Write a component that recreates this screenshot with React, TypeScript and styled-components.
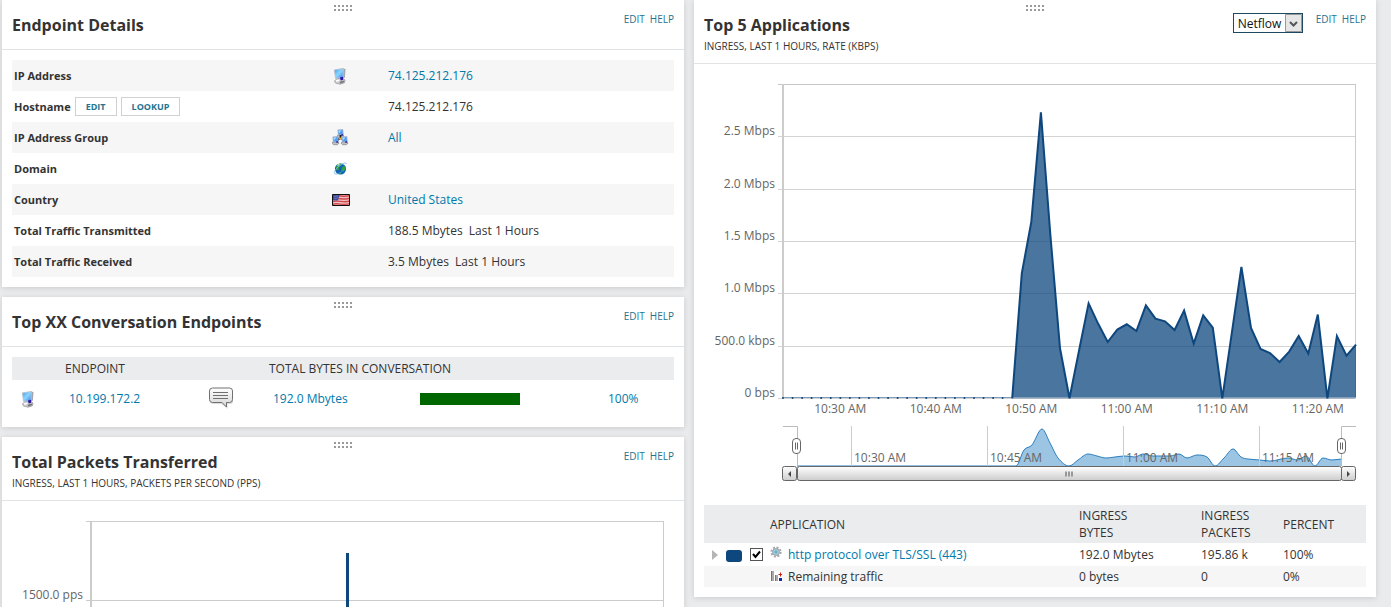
import React from "react";
import styled, { createGlobalStyle } from "styled-components";

const GlobalStyle = createGlobalStyle`
  *, *::before, *::after { box-sizing: border-box; }
  body {
    margin: 0;
    background: #eaebed;
    color: #333;
    font: 12px/17px "Open Sans", "Noto Sans", sans-serif;
  }
  a { color: #0079aa; text-decoration: none; }
  svg { display: block; }
`;

const Page = styled.main`
  display: grid;
  grid-template-columns: 1fr 1fr;
  gap: 10px;
  align-items: start;
  height: 100vh;
  overflow-y: auto;
  scrollbar-width: none;
  padding: 0 15px 0 2px;
`;

const Column = styled.div`
  display: flex;
  flex-direction: column;
  gap: 10px;
  min-width: 0;
`;

const Card = styled.section`
  position: relative;
  background: #fff;
  box-shadow: 0 1px 6px rgba(0, 0, 0, 0.14);
`;

const Grip = styled.svg`
  position: absolute;
  top: 5px;
  left: 50%;
  margin-left: -9px;
  fill: #999;
`;

const CardHeader = styled.header`
  display: flex;
  align-items: flex-start;
  padding: 12px 10px 11px;
  border-bottom: 1px solid #e2e3e4;
`;

const Titles = styled.div`
  flex: 1;
`;

const Title = styled.h2`
  margin: 0;
  font-size: 16px;
  font-weight: 700;
  line-height: 26px;
`;

const Subtitle = styled.div`
  padding-top: 2px;
  font-size: 10px;
  line-height: 12px;
  text-transform: uppercase;
`;

const Actions = styled.nav`
  display: flex;
  gap: 5px;
  font-size: 10px;
  line-height: 14px;
  a { color: #24748f; }
`;

const CardBody = styled.div`
  padding: 10px;
`;

const SelectBox = styled.div`
  position: relative;
  margin: 1px 13px -7px 0;
`;

const Select = styled.select`
  appearance: none;
  display: block;
  width: 70px;
  height: 20px;
  padding: 0 18px 0 4px;
  border: 1px solid #1d4a60;
  border-radius: 0;
  background: #fff;
  color: #111;
  font: inherit;
`;

const SelectArrow = styled.svg`
  position: absolute;
  top: 1px;
  right: 1px;
  pointer-events: none;
`;

const DetailTable = styled.table`
  width: 100%;
  border-collapse: collapse;
  table-layout: fixed;
  th, td { height: 31px; padding: 0 4px; text-align: left; }
  th { padding: 0 2px; font-size: 11px; font-weight: 700; }
  tr:nth-child(odd) { background: #f6f6f6; }
`;

const LabelRow = styled.div`
  display: flex;
  align-items: center;
  gap: 4px;
`;

const SmallButton = styled.button`
  height: 19px;
  padding: 0 10px;
  border: 1px solid #d0d1d2;
  background: #fff;
  color: #24748f;
  font: 700 9px/15px "Open Sans", sans-serif;
`;

const Col = styled.col<{ $w?: number }>`
  width: ${(p) => (p.$w ? `${p.$w}px` : "auto")};
`;

const DataTable = styled.table<{ $pad: number }>`
  width: 100%;
  border-collapse: collapse;
  table-layout: fixed;
  th {
    background: #ebecee;
    padding: 2px ${(p) => p.$pad}px;
    font-weight: 400;
    text-align: left;
    text-transform: uppercase;
  }
  td { padding: 0; }
`;

const ConversationTable = styled(DataTable)`
  th { height: 23px; }
  td { height: 37px; padding-left: 8px; }
`;

const BarTrack = styled.td`
  && { padding: 0; }
`;

const PercentCell = styled.td`
  && { padding-left: 88px; }
`;

const Bar = styled.div`
  height: 12px;
  background: #060;
`;

const AppTable = styled(DataTable)`
  th { height: 38px; }
  td { height: 23px; }
  tr:nth-child(2) td { height: 21px; background: #f6f6f6; }
`;

const AppName = styled.div`
  display: flex;
  align-items: center;
  gap: 6px;
`;

const ExpandButton = styled.button`
  display: block;
  margin-left: 8px;
  padding: 0;
  border: 0;
  background: none;
`;

const Swatch = styled.div`
  width: 16px;
  height: 12px;
  margin: 2px 0 0 4px;
  border-radius: 3px;
  background: #0e477e;
`;

const Check = styled.input`
  appearance: none;
  display: block;
  width: 13px;
  height: 13px;
  margin: 0 0 0 4px;
  border: 1px solid #555;
  background: #fff;
  &:not(:checked) + svg { visibility: hidden; }
`;

const CheckBox = styled.label`
  position: relative;
  display: block;
  svg {
    position: absolute;
    top: 0;
    left: 4px;
    pointer-events: none;
  }
`;

const Chart = styled.svg`
  width: 100%;
  height: auto;
  font-size: 12px;
  fill: #666;
`;

const ComputerIcon = () => (
  <svg width="16" height="18" viewBox="0 0 16 18">
    <defs>
      <linearGradient id="screen" x1="0" y1="0" x2="1" y2="1">
        <stop offset="0" stopColor="#3a9cf0" />
        <stop offset="0.5" stopColor="#8bd6ff" />
        <stop offset="1" stopColor="#2f7cf0" />
      </linearGradient>
    </defs>
    <path d="M10.500 1.500l3 .6-.6 8.400-1.900 1z" fill="#a5a5ae" />
    <path d="M2.500 14l2.500-2.500h6l2 1.500-.6 2.800-4.400 1.400-4.500-1.200z" fill="#cfcfd2" stroke="#98989d" strokeWidth="0.800" />
    <path d="M2.300 2.900L11.400 1.400l-.4 9-7.400 1z" fill="url(#screen)" stroke="#bcc0ca" strokeWidth="0.900" />
    <path d="M7.800 10.600l3.200-.8.200 3-2.400.7z" fill="#2716a8" />
    <path d="M7.500 14.800l4.600-1.400v1.900l-4 1.200z" fill="#77777c" />
    <path d="M4 14l3.400-.6" stroke="#fff" strokeWidth="1.400" />
  </svg>
);

const MiniComputer = ({ x, y }: { x: number; y: number }) => (
  <g transform={`translate(${x} ${y})`}>
    <path d="M.8 6h5.400l.8 1.200-1.600 1.500H1.600L.2 7.400z" fill="#c2c2c6" stroke="#7f7f85" strokeWidth="0.700" />
    <path d="M.8.9l5-.5.5 5-5 .7z" fill="#4f9df5" stroke="#a9b3c8" strokeWidth="0.700" />
    <path d="M1.500 1.600l3-.3-2.600 2.900z" fill="#b5dcff" />
    <path d="M3.800 5.400l2.300-.4v1.800H4.400z" fill="#2f2b9e" />
  </g>
);

const GroupIcon = () => (
  <svg width="17" height="17" viewBox="0 0 17 17">
    <MiniComputer x={5} y={0} />
    <path d="M8.500 6v4M8.500 9L5 11.500M8.500 9l3.500 2" stroke="#1c1c1c" strokeWidth="1.800" />
    <path d="M7 8.500h3v2H7z" fill="#eea11f" />
    <MiniComputer x={0} y={7} />
    <MiniComputer x={9} y={7} />
  </svg>
);

const GlobeIcon = () => (
  <svg width="16" height="16" viewBox="0 0 16 16">
    <circle cx="8.500" cy="8" r="5.600" fill="#1262b4" />
    <path d="M4 6c1-2.600 3-3.600 5.500-3.400L8.500 5 6.800 6.600 7 8.500 4.500 9.600zM10 6l3-1.200.8 3-2 2.600-2.600-.6zM7 11l2.600.8L8 13.200z" fill="#31a04a" />
    <path d="M5.500 4.500l2-1.300" stroke="#c3eecb" strokeWidth="1.200" />
    <path d="M2.800 12.800c-1.600-1 .8-5 4.400-7.800s6.800-3.800 7.300-2.200" fill="none" stroke="#7fc4e4" strokeWidth="0.900" />
    <path d="M2.800 12.800c2.200.9 6-1 8.900-4" fill="none" stroke="#52a6d2" strokeWidth="0.700" />
  </svg>
);

const FlagIcon = () => (
  <svg width="18" height="12" viewBox="0 0 18 12">
    <path d="M0 0h18v12H0z" fill="#efc0c0" />
    <path d="M0 2.500c6-2.500 11 1.500 18-1M0 5.200c6-2.500 11 1.500 18-1M0 7.900c6-2.500 11 1.500 18-1M0 10.600c6-2.500 11 1.500 18-1" stroke="#d5484d" strokeWidth="1.400" fill="none" />
    <path d="M1 1h6.500L6 6.500H1z" fill="#3f4c9c" />
    <path d="M3 2v3M5 1.500v3" stroke="#8d99d0" strokeDasharray="1 1" />
    <path d="M.5.500h17v11H.5z" fill="none" stroke="#111" />
  </svg>
);

const BubbleIcon = () => (
  <svg width="26" height="24" viewBox="0 0 26 24">
    <defs>
      <linearGradient id="bubble" x1="0" y1="0" x2="0" y2="1">
        <stop offset="0" stopColor="#fff" />
        <stop offset="1" stopColor="#d4d4d4" />
      </linearGradient>
    </defs>
    <path d="M4 3h18a2 2 0 012 2v9.500a2.500 2.500 0 01-2.500 2.500h-3v5L12.500 17H4a2.500 2.500 0 01-2.500-2.500z" fill="#000" opacity="0.140" />
    <path d="M3.500 1h17a3 3 0 013 3v8.500a3 3 0 01-3 3h-3v4.500L13 15.500H3.500a3 3 0 01-3-3V4a3 3 0 013-3z" fill="url(#bubble)" stroke="#707070" />
    <path d="M4 5.500h15M4 8.500h15M4 11.500h15" stroke="#707070" />
  </svg>
);

const GearShape = styled.svg`
  margin-top: -5px;
`;

const GearIcon = () => (
  <GearShape width="12" height="12" viewBox="0 0 12 12">
    <circle cx="6" cy="6" r="4.600" fill="none" stroke="#a3a8ab" strokeWidth="2" strokeDasharray="2 1.610" />
    <circle cx="6" cy="6" r="3.400" fill="#b4d2de" stroke="#979da1" />
    <circle cx="6" cy="6" r="1.700" fill="#5fb3d0" />
  </GearShape>
);

const RemainingIcon = () => (
  <svg width="12" height="12" viewBox="0 0 12 12">
    <path d="M0 0h12v12H0z" fill="#fff" />
    <path d="M1 0h3v10H1zM5 4h3v6H5z" fill="#aaa" />
    <path d="M1 0h1v10H1zM5 4h1v6H5z" fill="#777" />
    <path d="M9 7h3v3H9z" fill="#1428b4" />
    <path d="M8.500 3.500H12M10.500 1.500v4" stroke="#d01818" />
  </svg>
);

const DragGrip = () => (
  <Grip width="18" height="6" viewBox="0 0 18 6">
    {[0, 4, 8, 12, 16].map((x) => (
      <path key={x} d={`M${x} 0h2v2h-2zM${x} 4h2v2h-2z`} />
    ))}
  </Grip>
);

type PanelProps = {
  title: string;
  subtitle?: string;
  tools?: React.ReactNode;
  children: React.ReactNode;
};

const Panel = ({ title, subtitle, tools, children }: PanelProps) => (
  <Card>
    <DragGrip />
    <CardHeader>
      <Titles>
        <Title>{title}</Title>
        {subtitle && <Subtitle>{subtitle}</Subtitle>}
      </Titles>
      {tools}
      <Actions>
        <a href="#edit">EDIT</a>
        <a href="#help">HELP</a>
      </Actions>
    </CardHeader>
    <CardBody>{children}</CardBody>
  </Card>
);

const details: { label: string; icon?: React.ReactNode; value?: string; link?: boolean }[] = [
  { label: "IP Address", icon: <ComputerIcon />, value: "74.125.212.176", link: true },
  { label: "Hostname", value: "74.125.212.176" },
  { label: "IP Address Group", icon: <GroupIcon />, value: "All", link: true },
  { label: "Domain", icon: <GlobeIcon /> },
  { label: "Country", icon: <FlagIcon />, value: "United States", link: true },
  { label: "Total Traffic Transmitted", value: "188.5 Mbytes\u00a0 Last 1 Hours" },
  { label: "Total Traffic Received", value: "3.5 Mbytes\u00a0 Last 1 Hours" },
];

const EndpointDetails = () => (
  <Panel title="Endpoint Details">
    <DetailTable>
      <colgroup>
        <Col $w={316} />
        <Col $w={56} />
        <Col />
      </colgroup>
      <tbody>
        {details.map((d) => (
          <tr key={d.label}>
            <th scope="row">
              <LabelRow>
                {d.label}
                {d.label === "Hostname" && (
                  <>
                    <SmallButton type="button">EDIT</SmallButton>
                    <SmallButton type="button">LOOKUP</SmallButton>
                  </>
                )}
              </LabelRow>
            </th>
            <td>{d.icon}</td>
            <td>{d.link ? <a href="#detail">{d.value}</a> : d.value}</td>
          </tr>
        ))}
      </tbody>
    </DetailTable>
  </Panel>
);

const Conversations = () => (
  <Panel title="Top XX Conversation Endpoints">
    <ConversationTable $pad={4}>
      <colgroup>
        <Col $w={49} />
        <Col $w={140} />
        <Col $w={64} />
        <Col $w={155} />
        <Col $w={100} />
        <Col />
      </colgroup>
      <thead>
        <tr>
          <th />
          <th scope="col">Endpoint</th>
          <th />
          <th scope="col" colSpan={3}>Total bytes in conversation</th>
        </tr>
      </thead>
      <tbody>
        <tr>
          <td><ComputerIcon /></td>
          <td><a href="#endpoint">10.199.172.2</a></td>
          <td><BubbleIcon /></td>
          <td><a href="#bytes">192.0 Mbytes</a></td>
          <BarTrack><Bar style={{ width: "100%" }} /></BarTrack>
          <PercentCell><a href="#percent">100%</a></PercentCell>
        </tr>
      </tbody>
    </ConversationTable>
  </Panel>
);

const PacketsChart = () => (
  <Chart viewBox="0 0 662 330" role="img" aria-label="Packets per second">
    <g stroke="#ccc" shapeRendering="crispEdges">
      <path d="M74 10.500h577.500v314M74 89.500h577.500M74 168.500h577.500M74 246.500h577.500M74 324.500h577.500" fill="none" />
      <path d="M79 10v314" strokeWidth="2" />
    </g>
    <text x="71" y="88" textAnchor="end">1500.0 pps</text>
    <path d="M334 42h3v282h-3z" fill="#0e477e" />
  </Chart>
);

const kbps = [
  ...Array(25).fill(0),
  1195, 1685, 2734, 1558, 478, 0, 459, 908, 712, 538, 657, 707, 643, 889, 762, 736, 653, 838, 523,
  793, 676, 0, 631, 1255, 672, 471, 433, 347, 446, 596, 427, 800, 0, 596, 408, 513,
];

const PLOT = { x: 79, top: 10.5, width: 573, height: 313.8, step: 9.55, max: 3000 };
const BASE = PLOT.top + PLOT.height;
const px = (i: number) => PLOT.x + i * PLOT.step;
const py = (v: number) => BASE - (v / PLOT.max) * PLOT.height;
const areaLine = kbps.map((v, i) => `${i ? "L" : "M"}${px(i).toFixed(1)} ${py(v).toFixed(1)}`).join("");
const yLabels = ["", "2.5 Mbps", "2.0 Mbps", "1.5 Mbps", "1.0 Mbps", "500.0 kbps", "0 bps"];
const xLabels = ["10:30 AM", "10:40 AM", "10:50 AM", "11:00 AM", "11:10 AM", "11:20 AM"];

const NAV = { top: 352, bottom: 392 };
const overview: [number, number][] = [
  [93, 0], [312, 0], [320, 16], [328, 21], [338, 37], [346, 23], [354, 8], [365, 0],
  [374, 6], [384, 12], [393, 10], [402, 8], [411, 9], [421, 10], [431, 9], [439, 12], [449, 10], [466, 10],
  [475, 12], [483, 8], [493, 11], [503, 9], [511, 0], [520, 8], [529, 17], [537, 9], [544, 7], [556, 6],
  [566, 5], [584, 8], [594, 6], [602, 10], [611, 0], [619, 8], [628, 6], [638, 7],
];

// Slope of the overview curve at a point; level where it peaks or touches zero.
const slopeAt = (i: number) => {
  const prev = overview[i - 1];
  const next = overview[i + 1];
  const [, v] = overview[i];
  if (!prev || !next || v === 0 || (v - prev[1]) * (next[1] - v) <= 0) return 0;
  return (next[1] - prev[1]) / (next[0] - prev[0]);
};

const overviewLine = overview.reduce((path, [x, v], i) => {
  const y = NAV.bottom - v;
  if (i === 0) return `M${x} ${y}`;
  const [x1, v1] = overview[i - 1];
  const run = (x - x1) / 3;
  const c1 = NAV.bottom - v1 - slopeAt(i - 1) * run;
  const c2 = y + slopeAt(i) * run;
  return `${path}C${(x1 + run).toFixed(1)} ${c1.toFixed(1)} ${(x - run).toFixed(1)} ${c2.toFixed(1)} ${x} ${y}`;
}, "");

const navTicks: [number, string][] = [[147, "10:30 AM"], [283, "10:45 AM"], [419, "11:00 AM"], [555, "11:15 AM"]];

const NavHandle = ({ x }: { x: number }) => (
  <g transform={`translate(${x} 364)`} stroke="#666">
    <rect x="-3.500" y="0.500" width="8" height="15" rx="3.500" fill="#fff" />
    <path d="M-.5 4.500v7M1.500 4.500v7" />
  </g>
);

const ApplicationsChart = () => (
  <Chart viewBox="0 0 662 431" role="img" aria-label="Top applications rate">
    <defs>
      <linearGradient id="thumb" x1="0" y1="0" x2="0" y2="1">
        <stop offset="0" stopColor="#fff" />
        <stop offset="1" stopColor="#ccc" />
      </linearGradient>
    </defs>
    {yLabels.map((label, i) => {
      const y = Math.floor(PLOT.top + (i * PLOT.height) / 6);
      return (
        <g key={i}>
          <path d={`M74 ${y}.500h577`} stroke={i ? "#d3d3d3" : "#c6c6c6"} shapeRendering="crispEdges" />
          <text x="71" y={y - 1} textAnchor="end">{label}</text>
        </g>
      );
    })}
    <path d="M651.500 10v314" stroke="#ccc" />
    <path d="M79 10v314" stroke="#ccc" strokeWidth="2" />
    <path d={`${areaLine}V${BASE}H${PLOT.x}z`} fill="#0e477e" fillOpacity="0.750" />
    <path d={`M${PLOT.x} 323.500h${PLOT.width}`} stroke="#7f9cba" />
    <path d={areaLine.slice(areaLine.indexOf("L" + px(24).toFixed(1))).replace("L", "M")} fill="none" stroke="#0e477e" strokeWidth="2" />
    {Array.from({ length: 24 }, (_, i) => (
      <circle key={i} cx={px(i)} cy="324" r="1" fill="#0e477e" />
    ))}
    {xLabels.map((label, i) => (
      <text key={label} x={px(6 + i * 10)} y="339" textAnchor="middle">{label}</text>
    ))}

    <path d={`${overviewLine}V392H93z`} fill="#9cc5e4" />
    <path d={overviewLine} fill="none" stroke="#2a7fc0" />
    {navTicks.map(([x, label]) => (
      <g key={label}>
        <path d={`M${x}.500 ${NAV.top}V392`} stroke="#ccc" />
        <text x={x + 3} y="388">{label}</text>
      </g>
    ))}
    <path d="M79 352.500h14.500V392M652 352.500h-14.500V392" fill="none" stroke="#bbb" />
    <NavHandle x={92} />
    <NavHandle x={637} />
    <g stroke="#666">
      <rect x="78.500" y="392.500" width="14" height="14" rx="2" fill="url(#thumb)" />
      <rect x="637.500" y="392.500" width="14" height="14" rx="2" fill="url(#thumb)" />
      <rect x="93.500" y="392.500" width="544" height="14" rx="2" fill="url(#thumb)" />
    </g>
    <path d="M87 397v6l-3-3zM643 397v6l3-3z" fill="#444" />
    <path d="M362 397.500v5M365 397.500v5M368 397.500v5" stroke="#999" strokeWidth="2" />
  </Chart>
);

const FlowSelect = () => (
  <SelectBox>
    <Select aria-label="Flow source" defaultValue="Netflow">
      <option>Netflow</option>
    </Select>
    <SelectArrow width="17" height="18" viewBox="0 0 17 18">
      <path d="M.5.500h16v17H.5z" fill="#e6e6e6" stroke="#999" />
      <path d="M5 8l3.500 3.500L12 8" fill="none" stroke="#555" strokeWidth="2" />
    </SelectArrow>
  </SelectBox>
);

const Applications = () => (
  <Panel title="Top 5 Applications" subtitle="Ingress, last 1 hours, rate (kbps)" tools={<FlowSelect />}>
    <ApplicationsChart />
    <AppTable $pad={0}>
      <colgroup>
        <Col $w={18} />
        <Col $w={24} />
        <Col $w={24} />
        <Col />
        <Col $w={122} />
        <Col $w={82} />
        <Col $w={83} />
      </colgroup>
      <thead>
        <tr>
          <th colSpan={3} />
          <th scope="col">Application</th>
          <th scope="col">Ingress<br />bytes</th>
          <th scope="col">Ingress<br />packets</th>
          <th scope="col">Percent</th>
        </tr>
      </thead>
      <tbody>
        <tr>
          <td>
            <ExpandButton type="button" aria-label="Expand">
              <svg width="6" height="10" viewBox="0 0 6 10"><path d="M0 0l6 5-6 5z" fill="#b5b5b5" /></svg>
            </ExpandButton>
          </td>
          <td><Swatch /></td>
          <td>
            <CheckBox>
              <Check type="checkbox" defaultChecked aria-label="Show http protocol over TLS/SSL (443)" />
              <svg width="13" height="13" viewBox="0 0 13 13">
                <path d="M3 6l2.500 3L10 3.500" fill="none" stroke="#000" strokeWidth="2" />
              </svg>
            </CheckBox>
          </td>
          <td><AppName><GearIcon /><a href="#app">http protocol over TLS/SSL (443)</a></AppName></td>
          <td>192.0 Mbytes</td>
          <td>195.86 k</td>
          <td>100%</td>
        </tr>
        <tr>
          <td /><td /><td />
          <td><AppName><RemainingIcon />Remaining traffic</AppName></td>
          <td>0 bytes</td>
          <td>0</td>
          <td>0%</td>
        </tr>
      </tbody>
    </AppTable>
  </Panel>
);

export default function App() {
  return (
    <>
      <GlobalStyle />
      <Page>
        <Column>
          <EndpointDetails />
          <Conversations />
          <Panel title="Total Packets Transferred" subtitle="Ingress, last 1 hours, packets per second (pps)">
            <PacketsChart />
          </Panel>
        </Column>
        <Column>
          <Applications />
        </Column>
      </Page>
    </>
  );
}
